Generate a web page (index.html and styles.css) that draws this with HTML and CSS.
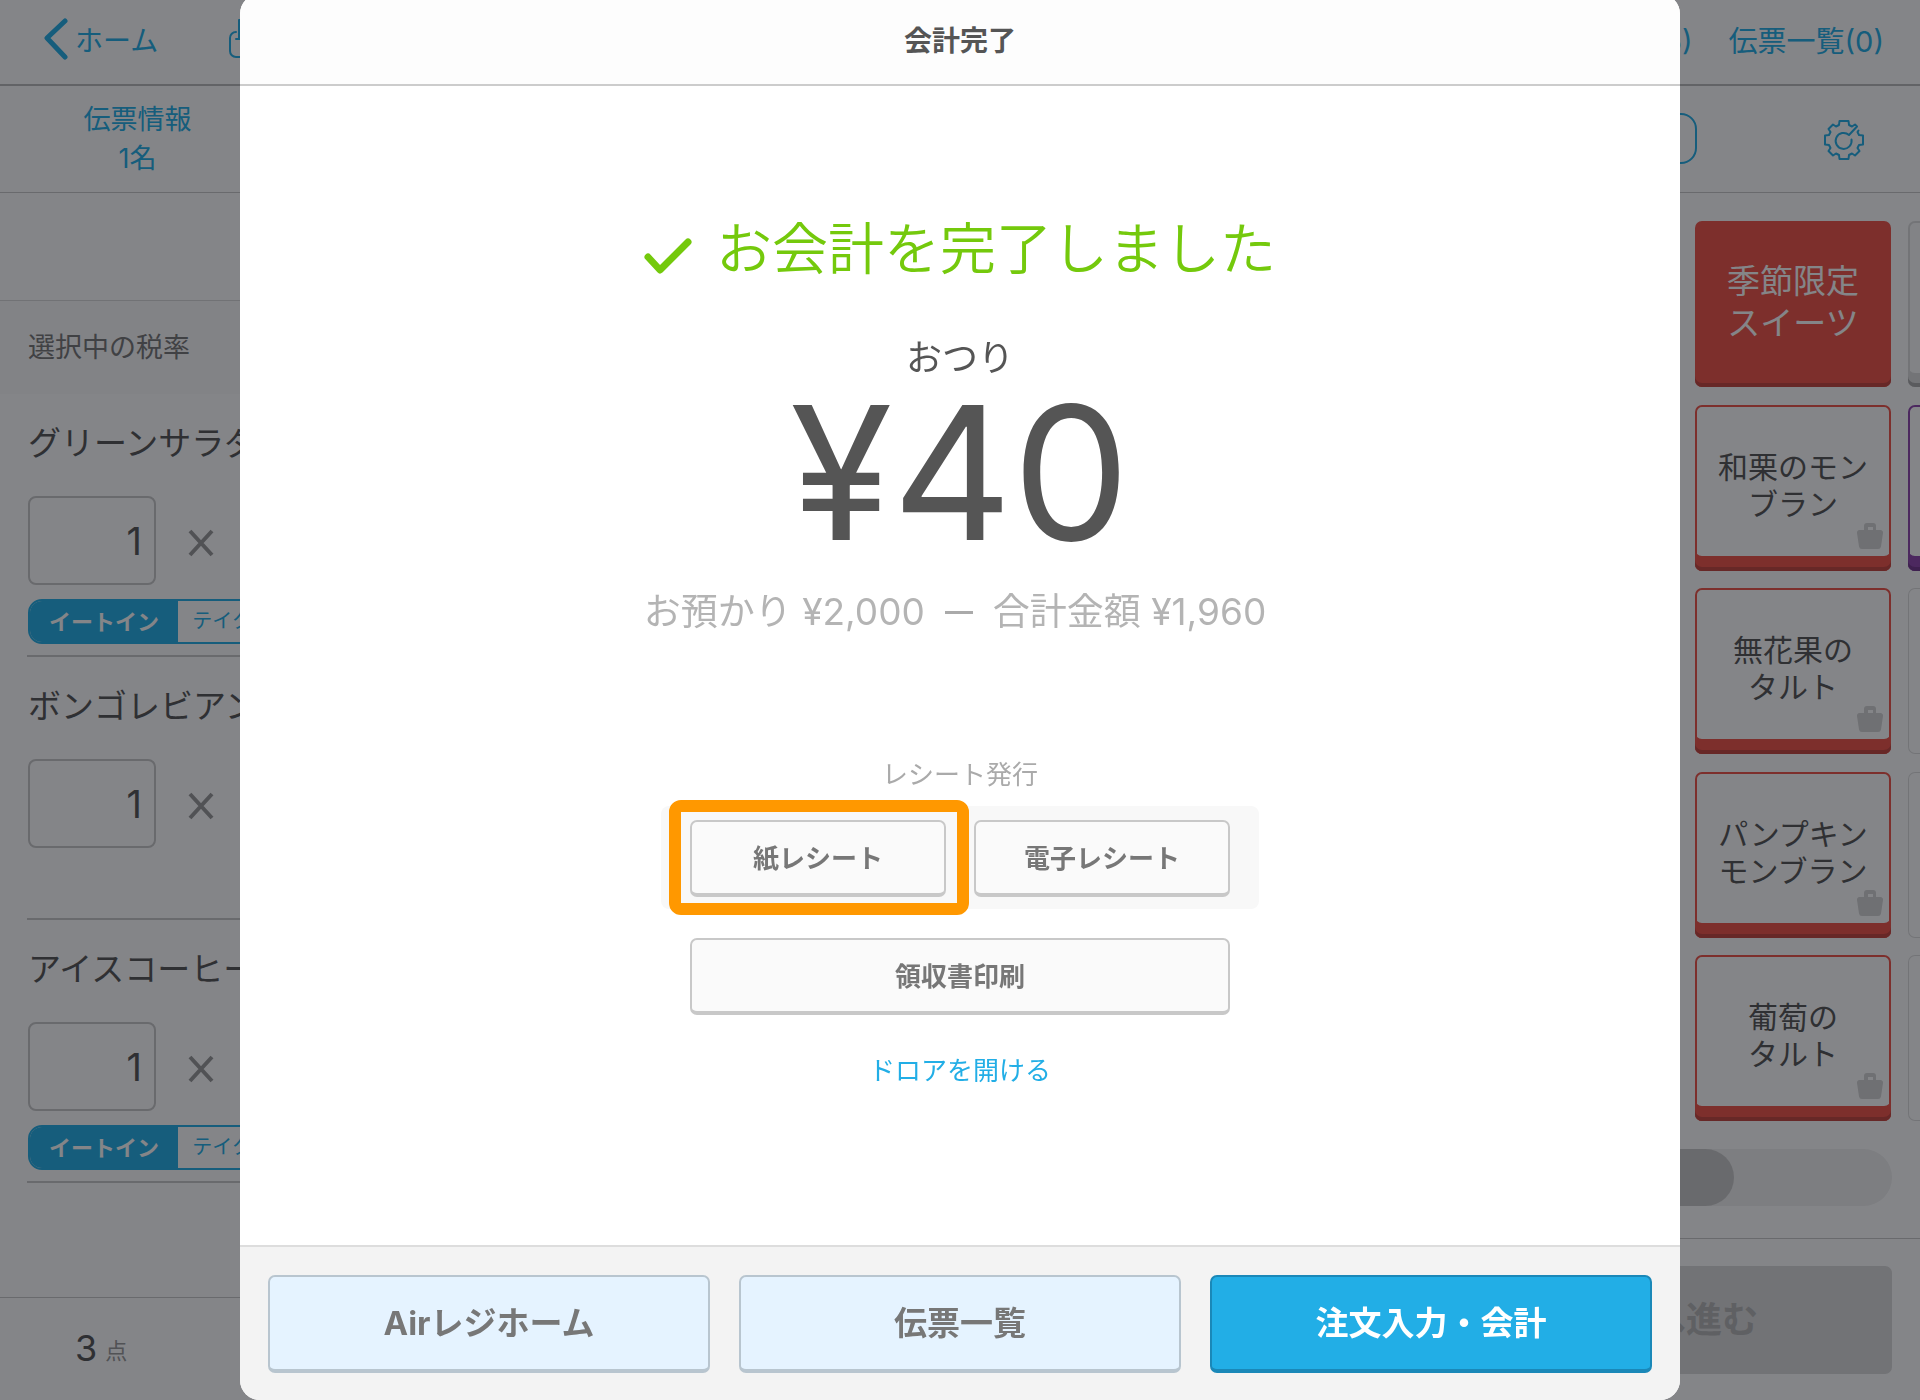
FILE: index.html
```html
<!DOCTYPE html>
<html lang="ja">
<head>
<meta charset="utf-8">
<meta name="viewport" content="width=device-width, initial-scale=1">
<title>会計完了</title>
<link rel="stylesheet" href="styles.css">
</head>
<body>
<svg class="sprite" aria-hidden="true">
  <symbol id="bag" viewBox="0 0 28 28">
    <path fill-rule="evenodd" d="M8 8V4a3 3 0 0 1 3-3h6a3 3 0 0 1 3 3v4h4.500a2.500 2.500 0 0 1 2.500 3l-2 13.500a3 3 0 0 1-3 2.500H6a3 3 0 0 1-3-2.500L1 11a2.500 2.500 0 0 1 2.500-3zM12 5v3h5V5z"/>
  </symbol>
  <symbol id="times" viewBox="0 0 24 28">
    <path d="M1 2l22 24M23 2L1 26"/>
  </symbol>
</svg>

<div class="app">
  <header class="topbar">
    <a class="back" href="#">
      <svg class="back-icon" viewBox="0 0 24 42" aria-hidden="true"><path d="M21 3L3 20l18 19"/></svg>
      ホーム
    </a>
    <svg class="printer" viewBox="0 0 44 40" aria-hidden="true"><path d="M7 20h30M10 20V1h24v19M7 13a6 6 0 0 0-6 6v13a6 6 0 0 0 6 6h30a6 6 0 0 0 6-6V19a6 6 0 0 0-6-6"/></svg>
    <nav class="top-links">
      <a href="#">(5)</a>
      <a href="#">伝票一覧(0)</a>
    </nav>
  </header>

  <div class="toolbar">
    <a class="slip-info" href="#">伝票情報<br>1名</a>
    <div class="tools">
      <button class="filter" type="button" aria-label="絞り込み"></button>
      <button class="gear" type="button" aria-label="設定">
        <svg viewBox="0 0 40 40" aria-hidden="true">
          <path d="M34.500 10.500L33.500 12 35 15 39 15.500V24.500L35 25 33.500 28 35.500 31 31 35.500 28 33.500 25 35 24.500 39H15.500L15 35 12 33.500 9 35.500 4.500 31 6.500 28 5 25 1 24.500V15.500L5 15 6.500 12 4.500 9 9 4.500 12 6.500 15 5 15.500 1H24.500L25 5 28 6.500 31 4.500 33 6.500 25 15A8 8 0 1 0 27.500 19.500"/>
        </svg>
      </button>
    </div>
  </div>

  <main class="workspace">
    <section class="order">
      <div class="order-head"></div>
      <p class="tax">選択中の税率</p>
      <ul class="items">
        <li class="item">
          <p class="item-name">グリーンサラダ</p>
          <div class="qty"><input type="text" value="1" aria-label="数量"><svg class="times" aria-hidden="true"><use href="#times"/></svg></div>
          <div class="segment"><button class="on" type="button">イートイン</button><button type="button">テイクアウト</button></div>
        </li>
        <li class="item">
          <p class="item-name">ボンゴレビアンコ</p>
          <div class="qty"><input type="text" value="1" aria-label="数量"><svg class="times" aria-hidden="true"><use href="#times"/></svg></div>
        </li>
        <li class="item">
          <p class="item-name">アイスコーヒー</p>
          <div class="qty"><input type="text" value="1" aria-label="数量"><svg class="times" aria-hidden="true"><use href="#times"/></svg></div>
          <div class="segment"><button class="on" type="button">イートイン</button><button type="button">テイクアウト</button></div>
        </li>
      </ul>
      <footer class="count">3<small>点</small></footer>
    </section>

    <section class="catalog">
      <div class="tiles">
        <button class="tile category" type="button">季節限定<br>スイーツ</button>
        <button class="tile muted" type="button" aria-label="カテゴリー"></button>
        <button class="tile red" type="button">和栗のモン<br>ブラン<svg class="bag" aria-hidden="true"><use href="#bag"/></svg></button>
        <button class="tile purple" type="button" aria-label="商品"></button>
        <button class="tile red" type="button">無花果の<br>タルト<svg class="bag" aria-hidden="true"><use href="#bag"/></svg></button>
        <button class="tile" type="button" aria-label="空き"></button>
        <button class="tile red" type="button">パンプキン<br>モンブラン<svg class="bag" aria-hidden="true"><use href="#bag"/></svg></button>
        <button class="tile" type="button" aria-label="空き"></button>
        <button class="tile red" type="button">葡萄の<br>タルト<svg class="bag" aria-hidden="true"><use href="#bag"/></svg></button>
        <button class="tile" type="button" aria-label="空き"></button>
      </div>
      <div class="scroll"><div class="scroll-thumb"></div></div>
      <footer class="proceed-bar"><button class="proceed" type="button" disabled>へ進む</button></footer>
    </section>
  </main>
</div>

<div class="overlay">
  <div class="dialog" role="dialog" aria-modal="true" aria-labelledby="dialog-title">
    <h1 class="dialog-title" id="dialog-title">会計完了</h1>
    <div class="dialog-body">
      <h2 class="done">
        <svg class="check" viewBox="0 0 48 36" aria-hidden="true"><path d="M4 19l12 13L44 4"/></svg>
        お会計を完了しました
      </h2>
      <p class="change-label">おつり</p>
      <p class="change">¥40</p>
      <p class="breakdown"><span>お預かり ¥2,000</span><span class="minus"></span><span>合計金額 ¥1,960</span></p>
      <p class="receipt-label">レシート発行</p>
      <div class="receipts">
        <div class="highlight"><button class="plain" type="button">紙レシート</button></div>
        <button class="plain" type="button">電子レシート</button>
      </div>
      <button class="plain wide" type="button">領収書印刷</button>
      <a class="drawer" href="#">ドロアを開ける</a>
    </div>
    <footer class="actions">
      <button class="action" type="button">Airレジホーム</button>
      <button class="action" type="button">伝票一覧</button>
      <button class="action primary" type="button">注文入力・会計</button>
    </footer>
  </div>
</div>
</body>
</html>
```
FILE: styles.css
```css
* {
  box-sizing: border-box;
}

:root {
  --blue: #22aee6;
  --red: #f05246;
  --red-dark: #c4443c;
  --ink: #555;
  --line: #c8c8c8;
}

body {
  margin: 0;
  color: var(--ink);
  background: #fff;
  font-family: Inter, "Noto Sans CJK JP", sans-serif;
  font-size: 27px;
  overflow: hidden;
}

h1, h2, p, ul {
  margin: 0;
  padding: 0;
  font-weight: 400;
  list-style: none;
}

a {
  color: var(--blue);
  text-decoration: none;
}

button, input {
  margin: 0;
  padding: 0;
  border: 0;
  color: inherit;
  background: none;
  font: inherit;
}

svg {
  display: block;
  fill: none;
  stroke-linecap: round;
  stroke-linejoin: round;
}

.sprite {
  position: absolute;
  width: 0;
  height: 0;
}

/* Register screen behind the dialog */

.app {
  display: flex;
  flex-direction: column;
  height: 100vh;
  overflow: hidden;
}

.topbar {
  display: flex;
  align-items: center;
  flex: none;
  height: 86px;
  padding: 0 36px 6px 44px;
  border-bottom: 2px solid #bbb;
}

.back {
  display: flex;
  align-items: center;
  gap: 7px;
  width: 185px;
  font-size: 28px;
}

.back-icon {
  width: 24px;
  height: 42px;
  stroke: var(--blue);
  stroke-width: 5;
}

.printer {
  width: 44px;
  height: 40px;
  stroke: var(--blue);
  stroke-width: 2;
}

.top-links {
  display: flex;
  align-items: baseline;
  gap: 36px;
  margin-left: auto;
  font-size: 29px;
}

.toolbar {
  display: flex;
  align-items: center;
  justify-content: space-between;
  flex: none;
  height: 107px;
  border-bottom: 1px solid var(--line);
}

.slip-info {
  width: 275px;
  line-height: 39px;
  text-align: center;
}

.tools {
  display: flex;
  align-items: center;
  gap: 127px;
  padding: 0 56px 2px 0;
}

.filter {
  width: 80px;
  height: 51px;
  border: 2px solid var(--blue);
  border-radius: 16px;
}

.gear {
  padding-top: 4px;
}

.gear svg {
  width: 40px;
  height: 40px;
  stroke: var(--blue);
  stroke-width: 2;
}

.workspace {
  display: flex;
  flex: 1;
  min-height: 0;
}

.order, .catalog {
  display: flex;
  flex: 1;
  flex-direction: column;
  min-width: 0;
}

.order-head {
  height: 108px;
  border-bottom: 1px solid #d8d8d8;
}

.tax {
  height: 93px;
  padding-left: 28px;
  line-height: 94px;
  background: #fafafa;
  color: #777;
}

.items {
  flex: 1;
}

.item {
  height: 263px;
  margin-left: 27px;
  padding-left: 1px;
  border-bottom: 2px solid var(--line);
}

.item-name {
  height: 102px;
  font-size: 33px;
  line-height: 98px;
}

.qty {
  display: flex;
  align-items: center;
  gap: 32px;
}

.qty input {
  width: 128px;
  height: 89px;
  padding-right: 12px;
  border: 2px solid var(--line);
  border-radius: 8px;
  font-size: 38px;
  text-align: right;
}

.times {
  width: 26px;
  height: 28px;
  margin-top: 4px;
  stroke: #999;
  stroke-width: 4;
  stroke-linecap: butt;
}

.segment {
  display: flex;
  width: 300px;
  height: 45px;
  margin-top: 14px;
  overflow: hidden;
  border: 2px solid var(--blue);
  border-radius: 14px;
}

.segment button {
  flex: 1;
  padding-bottom: 4px;
  color: var(--blue);
  font-size: 20px;
}

.segment .on {
  background: var(--blue);
  color: #fff;
  font-size: 22px;
  font-weight: 700;
}

.count {
  display: flex;
  gap: 8px;
  height: 103px;
  padding-left: 75px;
  border-top: 1px solid var(--line);
  font-size: 36px;
  line-height: 100px;
}

.count small {
  color: #999;
  font-size: 22px;
  line-height: 106px;
}

.tiles {
  display: grid;
  grid-template-columns: 196px 196px;
  grid-auto-rows: 166px;
  align-content: space-between;
  justify-content: end;
  column-gap: 17px;
  height: 900px;
  margin: 28px -184px 28px 0;
}

.tile {
  position: relative;
  padding-bottom: 4px;
  border-radius: 7px;
  box-shadow: inset 0 0 0 1px #ddd;
  font-size: 30px;
  line-height: 37px;
}

.tile.category {
  background: var(--red);
  box-shadow: inset 0 -4px 0 var(--red-dark);
  color: #fff;
  font-size: 33px;
  line-height: 42px;
}

.tile.muted {
  background: #fafafa;
  box-shadow: inset 0 -4px 0 #aaa, inset 0 -14px 0 #ddd, inset 0 0 0 2px #ddd;
}

.tile.red {
  box-shadow: inset 0 -4px 0 var(--red-dark), inset 0 -15px 0 var(--red), inset 0 0 0 2px var(--red);
}

.tile.purple {
  box-shadow: inset 0 -4px 0 #73358c, inset 0 -15px 0 #8e44ad, inset 0 0 0 2px #8e44ad;
}

.bag {
  position: absolute;
  right: 7px;
  bottom: 21px;
  width: 28px;
  height: 28px;
  fill: #d4d4d4;
}

.scroll {
  display: flex;
  height: 57px;
  margin-right: 28px;
  border-radius: 29px;
  background: #f0f0f0;
}

.scroll-thumb {
  width: calc(100% - 158px);
  border-radius: 29px;
  background: #c9c9c9;
}

.proceed-bar {
  display: flex;
  justify-content: flex-end;
  margin-top: auto;
  padding: 27px 28px 26px;
  border-top: 1px solid var(--line);
}

.proceed {
  width: 376px;
  height: 108px;
  padding-bottom: 6px;
  border-radius: 7px;
  background: #dadada;
  color: #b4b4b4;
  font-size: 36px;
  font-weight: 700;
}

/* Dialog */

.overlay {
  position: fixed;
  inset: 0;
  display: flex;
  justify-content: center;
  background: rgba(10, 12, 18, .5);
}

.dialog {
  display: flex;
  flex-direction: column;
  width: 75%;
  margin-top: -6px;
  overflow: hidden;
  border-radius: 20px;
  background: #fff;
}

.dialog-title {
  flex: none;
  height: 92px;
  padding-top: 6px;
  border-bottom: 2px solid #ccc;
  background: #fdfdfd;
  font-size: 28px;
  font-weight: 700;
  line-height: 82px;
  text-align: center;
}

.dialog-body {
  display: flex;
  flex: 1;
  flex-direction: column;
  align-items: center;
  padding-top: 121px;
}

.done {
  display: flex;
  align-items: center;
  gap: 24px;
  color: #74c90c;
  font-size: 56px;
  font-weight: 350;
  line-height: 84px;
}

.check {
  width: 48px;
  height: 36px;
  margin-top: 14px;
  stroke: #74c90c;
  stroke-width: 7;
}

.change-label {
  margin-top: 40px;
  font-size: 36px;
  line-height: 54px;
}

.change {
  margin-top: 4px;
  font-size: 186px;
  line-height: 168px;
}

.breakdown {
  display: flex;
  align-items: center;
  gap: 20px;
  margin: 28px 10px 0 0;
  color: #b4b4b4;
  font-size: 37px;
  line-height: 54px;
}

.minus {
  width: 28px;
  height: 3px;
  background: #aaa;
}

.receipt-label {
  margin-top: 117px;
  color: #aaa;
  font-size: 26px;
  line-height: 38px;
}

.receipts {
  display: flex;
  gap: 28px;
  margin-top: 12px;
  padding: 14px 29px 12px;
  border-radius: 8px;
  background: #f8f8f8;
}

.plain {
  width: 256px;
  height: 77px;
  padding-bottom: 3px;
  border: 2px solid #c8c8c8;
  border-bottom-width: 4px;
  border-radius: 7px;
  background: #fafafa;
  color: #777;
  font-size: 26px;
  font-weight: 700;
}

.highlight {
  position: relative;
}

.highlight::after {
  content: "";
  position: absolute;
  inset: -20px -23px -18px -21px;
  border: 12px solid #ff9800;
  border-radius: 12px;
  pointer-events: none;
}

.plain.wide {
  width: 540px;
  margin-top: 29px;
}

.drawer {
  margin-top: 36px;
  font-size: 26px;
  line-height: 40px;
}

.actions {
  display: flex;
  flex: none;
  gap: 29px;
  padding: 28px 28px 27px;
  border-top: 2px solid #ddd;
  background: #f3f3f3;
}

.action {
  flex: 1;
  height: 98px;
  padding-bottom: 5px;
  border: 2px solid #b8c5cf;
  border-bottom-width: 4px;
  border-radius: 7px;
  background: #e5f3ff;
  color: #777;
  font-size: 33px;
  font-weight: 700;
}

.action.primary {
  border-color: #1a88b8;
  background: var(--blue);
  color: #fff;
}
```
